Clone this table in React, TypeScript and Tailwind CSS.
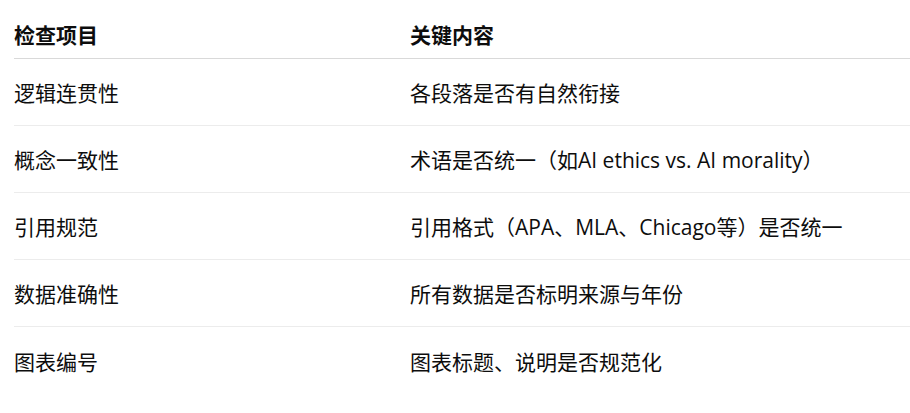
import React from "react";

const rows: [string, string][] = [
  ["逻辑连贯性", "各段落是否有自然衔接"],
  ["概念一致性", "术语是否统一（如AI ethics vs. AI morality）"],
  ["引用规范", "引用格式（APA、MLA、Chicago等）是否统一"],
  ["数据准确性", "所有数据是否标明来源与年份"],
  ["图表编号", "图表标题、说明是否规范化"],
];

export default function App() {
  return (
    <div
      className="w-[910px] h-[413px] bg-white text-[#0d0d0d] pl-[14px]"
      style={{ fontFamily: '"Open Sans", "Noto Sans CJK SC", sans-serif' }}
    >
      <div className="grid grid-cols-[396px_1fr] h-[59px] border-b border-[#d9d9d9] items-end pb-[9px] text-[21px] font-bold leading-[28px]">
        <div>检查项目</div>
        <div>关键内容</div>
      </div>
      {rows.map(([a, b], i) => (
        <div
          key={i}
          className={
            "grid grid-cols-[396px_1fr] h-[67px] items-center pt-[2px] text-[21px] leading-[28px] " +
            (i < rows.length - 1 ? "border-b border-[#ececec]" : "")
          }
        >
          <div>{a}</div>
          <div>{b}</div>
        </div>
      ))}
    </div>
  );
}
